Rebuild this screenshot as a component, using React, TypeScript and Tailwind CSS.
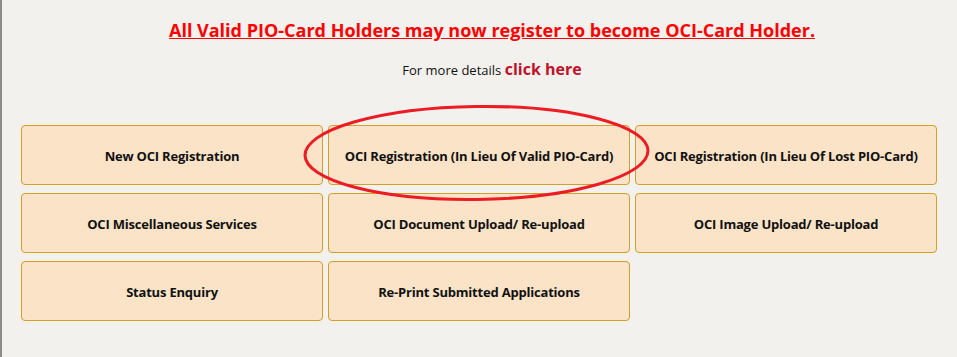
import React from "react";

const items = [
  "New OCI Registration",
  "OCI Registration (In Lieu Of Valid PIO-Card)",
  "OCI Registration (In Lieu Of Lost PIO-Card)",
  "OCI Miscellaneous Services",
  "OCI Document Upload/ Re-upload",
  "OCI Image Upload/ Re-upload",
  "Status Enquiry",
  "Re-Print Submitted Applications",
];

export default function App() {
  return (
    <div
      className="relative w-[957px] h-[357px] bg-[#f3f1ed] border-l-2 border-[#8c8c8c] overflow-hidden"
      style={{ fontFamily: '"Open Sans", "Noto Sans", sans-serif' }}
    >
      <div className="flex flex-col items-center pt-[18px] pl-[25px]">
        <a className="text-[18px] font-bold text-[#ff0000] underline leading-[24px]">
          All Valid PIO-Card Holders may now register to become OCI-Card Holder.
        </a>
        <div className="mt-[17px] text-[13px] text-[#111] leading-[20px]">
          For more details{" "}
          <a className="text-[16px] font-bold text-[#c0112b]">click here</a>
        </div>
      </div>
      <div className="grid grid-cols-[302px_302px_302px] gap-x-[5px] gap-y-[8px] ml-[19px] mt-[45px]">
        {items.map((t) => (
          <div
            key={t}
            className="h-[60px] flex items-center justify-center pt-[4px] bg-[#fae3c6] border border-[#d49f25] rounded-[4px] text-[13px] font-bold text-[#111] tracking-[-0.2px]"
          >
            {t}
          </div>
        ))}
      </div>
      <svg
        className="absolute left-0 top-0 pointer-events-none"
        width="957"
        height="357"
      >
        <ellipse
          cx="474.5"
          cy="153"
          rx="171.5"
          ry="46.5"
          fill="none"
          stroke="#ec1c24"
          strokeWidth="3"
          transform="rotate(-0.8 474.5 153)"
        />
      </svg>
    </div>
  );
}
